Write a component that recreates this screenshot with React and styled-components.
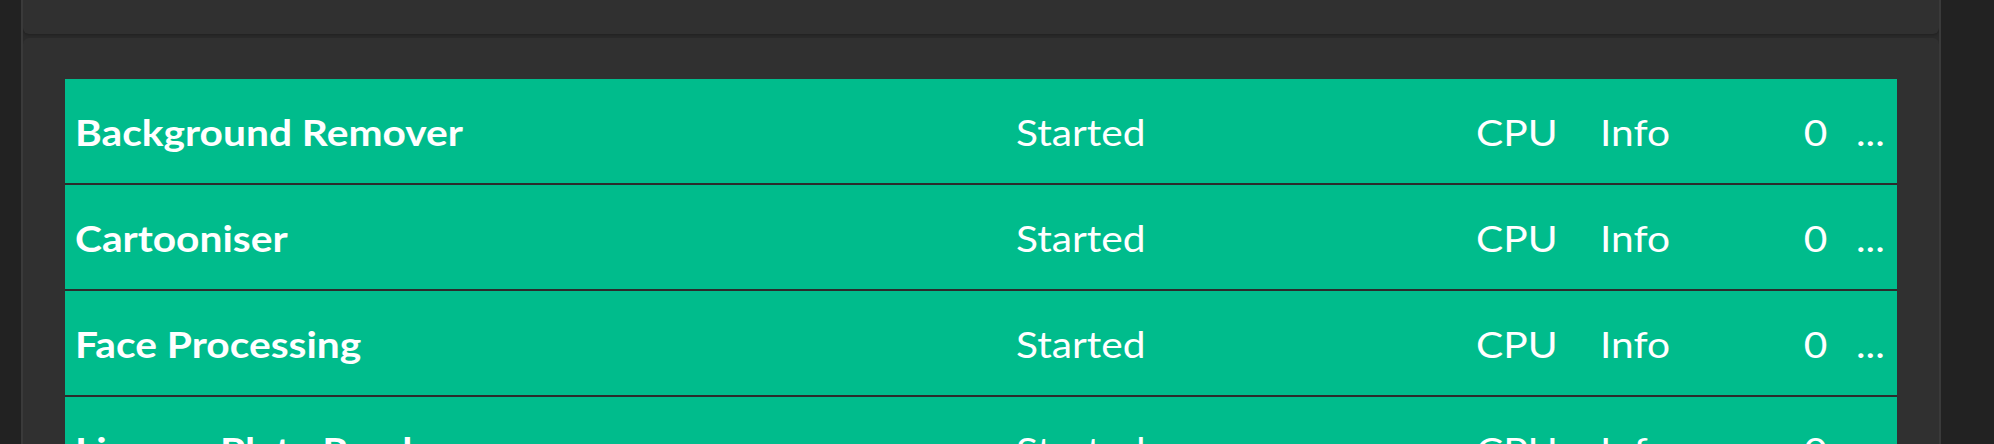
import React from 'react'
import styled, { createGlobalStyle } from 'styled-components'

const modules = [
    { id: 1, name: 'Background Remover', status: 'Started', device: 'CPU', level: 'Info', count: 0 },
    { id: 2, name: 'Cartooniser', status: 'Started', device: 'CPU', level: 'Info', count: 0 },
    { id: 3, name: 'Face Processing', status: 'Started', device: 'CPU', level: 'Info', count: 0 },
    { id: 4, name: 'License Plate Reader', status: 'Started', device: 'CPU', level: 'Info', count: 0 },
]

function App() {
    return (
        <>
            <GlobalStyle />
            <PageStyled>
                <TopBar />
                <Card>
                    <ModuleTable>
                        {modules.map((m) => {
                            return <Row key={m.id}>
                                <Cell $bold><Label>{m.name}</Label></Cell>
                                <Cell><Label>{m.status}</Label></Cell>
                                <Cell><Label>{m.device}</Label></Cell>
                                <Cell><Label>{m.level}</Label></Cell>
                                <Cell $right><Label $right>{m.count}</Label></Cell>
                                <Cell className="more"><Label>...</Label></Cell>
                            </Row>
                        })}
                    </ModuleTable>
                </Card>
            </PageStyled>
        </>
    )
}

const GlobalStyle = createGlobalStyle`
    html, body {
        margin: 0;
        padding: 0;
        background: #222222;
        overflow: hidden;
    }
    body {
        font-family: Lato, "Liberation Sans", sans-serif;
        color: #ffffff;
    }
`;

const PageStyled = styled.div`
    margin-left: 21px;
    width: 1916px;
    height: 444px;
    overflow: hidden;
    border-left: 2px solid #3a3a3a;
    border-right: 2px solid #3a3a3a;
    background: #2a2a2a;
    display: flex;
    flex-direction: column;
    gap: 4px;
`;

const TopBar = styled.div`
    flex-shrink: 0;
    height: 34px;
    background: #303030;
    border-radius: 0 0 6px 6px;
    box-shadow: 0 1px 3px rgba(0, 0, 0, 0.25);
`;

const Card = styled.div`
    flex: 1 0 auto;
    background: #303030;
    border-radius: 6px 6px 0 0;
    padding: 41px 42px 0 42px;
`;

const ModuleTable = styled.div`
    display: flex;
    flex-direction: column;
    gap: 2px;
    background: #2c2c2c;
`;

const Row = styled.div`
    flex-shrink: 0;
    height: 104px;
    background: #00bc8c;
    display: grid;
    grid-template-columns: 941px 460px 124px 147px 100px 1fr;
    align-items: center;
    font-size: 37px;
`;

const Cell = styled.div`
    padding: 0 10px;
    white-space: nowrap;
    font-weight: ${(p) => (p.$bold ? 700 : 400)};
    text-align: ${(p) => (p.$right ? 'right' : 'left')};

    &.more {
        padding-left: 19px;
        padding-right: 0;
    }
`;

/* the glyphs in the shot are drawn wider than the font's own widths */
const Label = styled.span`
    display: inline-block;
    transform: scaleX(1.1);
    transform-origin: ${(p) => (p.$right ? 'right' : 'left')} center;
`;

export default App
